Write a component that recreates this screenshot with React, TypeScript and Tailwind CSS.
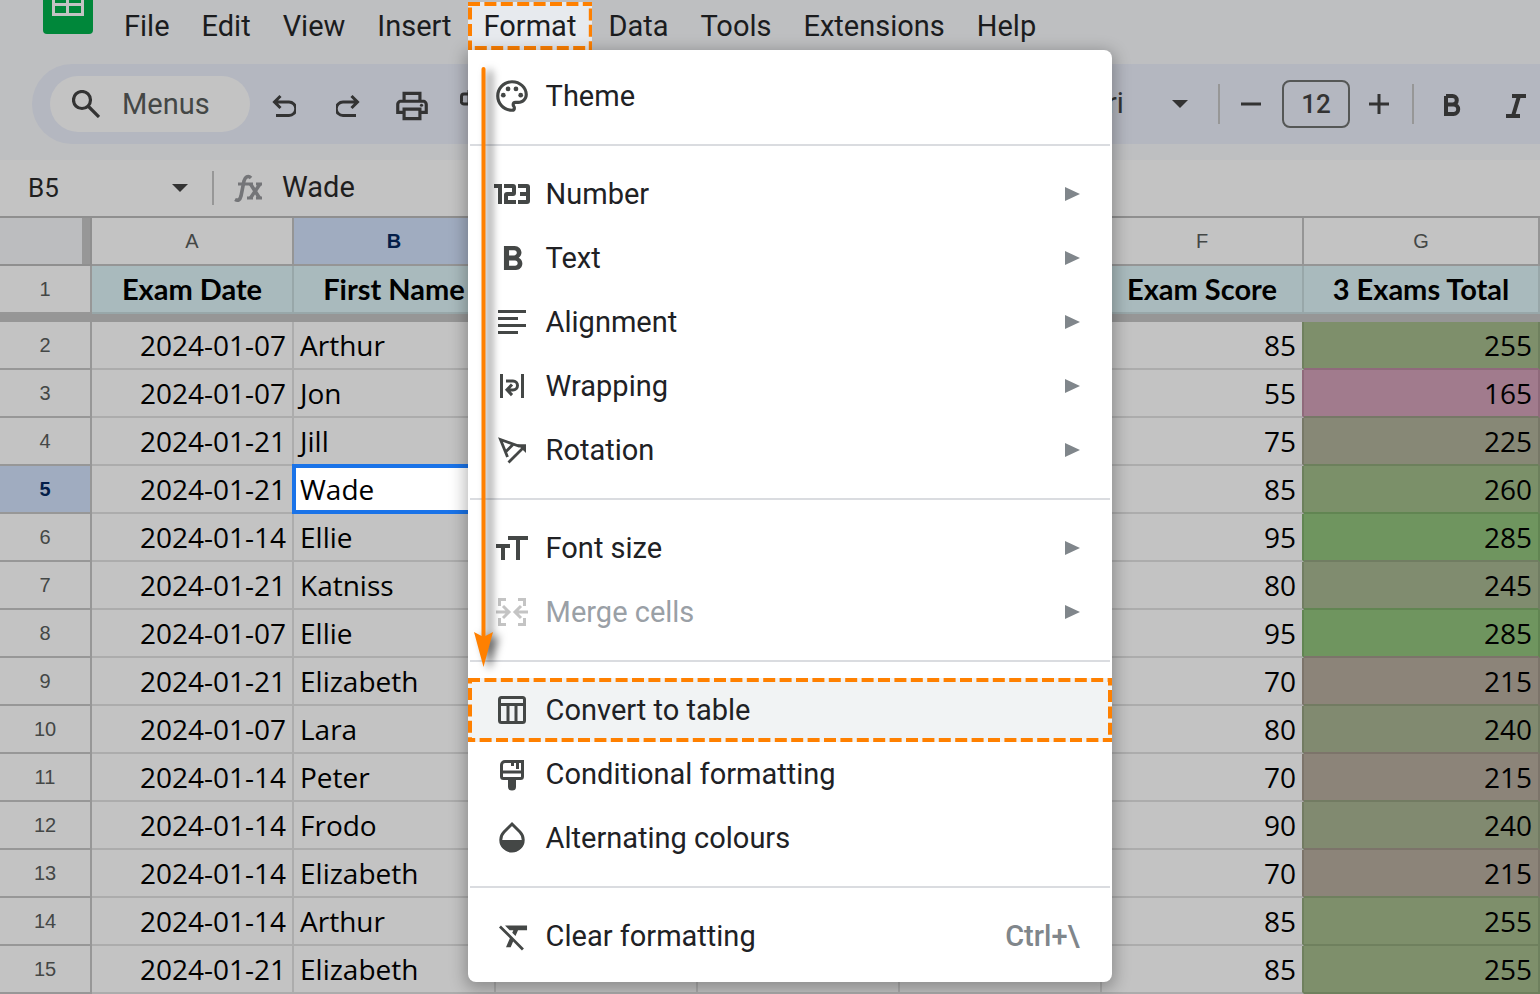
import type { ReactNode } from "react";
import { MdOutlinePalette, MdOutlinePrint } from "react-icons/md";

type Item = { label: string; icon: ReactNode; submenu?: boolean; disabled?: boolean; active?: boolean; shortcut?: string };

function Icon({ children, box = "0 0 36 36" }: { children: ReactNode; box?: string }) {
  return (
    <svg viewBox={box} className="size-9 shrink-0" fill="none" stroke="currentColor" strokeWidth="3" aria-hidden="true">
      {children}
    </svg>
  );
}

const groups: Item[][] = [
  [{ label: "Theme", icon: <MdOutlinePalette className="-mx-px size-[38px] shrink-0" aria-hidden="true" /> }],
  [
    {
      label: "Number",
      submenu: true,
      icon: (
        <Icon>
          <path strokeWidth="4" d="M0 10h6v18M10 10h9a1 1 0 0 1 1 1v6a1 1 0 0 1-1 1h-6a1 1 0 0 0-1 1v7h10M24 10h9a1 1 0 0 1 1 1v14a1 1 0 0 1-1 1h-9M26 18h8" />
        </Icon>
      ),
    },
    {
      label: "Text",
      submenu: true,
      icon: (
        <Icon box="1.2 0.5 21 21">
          <path
            fill="currentColor"
            stroke="none"
            d="M15.6 10.79c.97-.67 1.65-1.77 1.65-2.79 0-2.26-1.75-4-4-4H7v14h7.04c2.09 0 3.71-1.7 3.71-3.79 0-1.52-.86-2.82-2.15-3.42zM10 6.5h3c.83 0 1.5.67 1.5 1.5s-.67 1.5-1.5 1.5h-3v-3zm3.5 9H10v-3h3.5c.83 0 1.5.67 1.5 1.5s-.67 1.5-1.5 1.5z"
          />
        </Icon>
      ),
    },
    { label: "Alignment", submenu: true, icon: <Icon><path d="M4 7.5h28M4 14.5h20M4 21.5h28M4 28.5h20" /></Icon> },
    {
      label: "Wrapping",
      submenu: true,
      icon: <Icon><path d="M7.5 6v24M28.5 6v24M12 13h7a4.5 4.5 0 0 1 0 9h-5M18 16.5l-5 5.3 5 5.3" /></Icon>,
    },
    {
      label: "Rotation",
      submenu: true,
      icon: (
        <Icon>
          <path strokeWidth="2.8" d="M26 14.5L6.5 7.5l7 17.5M19.5 12l-8 8M14.5 30.5L29 16" />
          <path fill="currentColor" stroke="none" d="M23 12.3h9v8.7z" />
        </Icon>
      ),
    },
  ],
  [
    { label: "Font size", submenu: true, icon: <Icon><path strokeWidth="4" d="M14 8h20M24 8v22M2 16h14M9 16v14" /></Icon> },
    {
      label: "Merge cells",
      submenu: true,
      disabled: true,
      icon: (
        <Icon>
          <path d="M5.5 12V5.5H12M24 5.5h6.5V12M5.5 24v6.5H12M24 30.5h6.5V24M2 18h12M9 12l6 6-6 6M34 18H22M27 12l-6 6 6 6" />
        </Icon>
      ),
    },
  ],
  [
    {
      label: "Convert to table",
      active: true,
      icon: (
        <Icon>
          <rect x="5.5" y="5.5" width="25" height="25" rx="2" />
          <path d="M5 12.5h26M14 13v17M22 13v17" />
        </Icon>
      ),
    },
    {
      label: "Conditional formatting",
      icon: (
        <Icon>
          <path d="M11 5.5h17.5v15a2 2 0 0 1-2 2h-17a2 2 0 0 1-2-2V9a3.5 3.5 0 0 1 3.5-3.5zM7 16h22M18.5 5v5M23.5 5v8" />
          <path fill="currentColor" stroke="none" d="M14 23h8v8a4 3.5 0 0 1-8 0z" />
        </Icon>
      ),
    },
    {
      label: "Alternating colours",
      icon: (
        <Icon>
          <path d="M18 4l8 8a11.2 11.2 0 1 1-16 0z" />
          <path fill="currentColor" stroke="none" d="M6 20h24a12 12 0 0 1-24 0z" />
        </Icon>
      ),
    },
  ],
  [
    {
      label: "Clear formatting",
      shortcut: "Ctrl+\\",
      icon: (
        <Icon box="-1.2 0.2 23.1 23.1">
          <path
            fill="currentColor"
            stroke="none"
            d="M3.27 5L2 6.27l6.97 6.97L6.5 19h3l1.57-3.66L16.73 21 18 19.73 3.55 5.27 3.27 5zM6 5v.18L8.82 8h2.4l-.72 1.68 2.1 2.1L14.21 8H20V5H6z"
          />
        </Icon>
      ),
    },
  ],
];

function DashedFrame() {
  return (
    <svg className="absolute inset-0 size-full overflow-hidden" fill="none" stroke="#ff8000" aria-hidden="true">
      <rect width="100%" height="100%" strokeWidth="8" strokeDasharray="12 4.4" />
    </svg>
  );
}

function MenuRow({ item }: { item: Item }) {
  return (
    <button
      type="button"
      role="menuitem"
      disabled={item.disabled}
      className={`relative flex h-16 w-full items-center gap-4 pr-8 pl-[26px] text-left text-[29px] ${item.active ? "bg-[#f1f3f4]" : ""} ${item.disabled ? "text-[#9aa0a6]" : "text-[#202124]"}`}
    >
      <span className={item.disabled ? "text-[#c4c4c4]" : "text-[#444746]"}>{item.icon}</span>
      <span className="flex-1 pt-0.5">{item.label}</span>
      {item.submenu && (
        <svg viewBox="0 0 15 14" className="h-3.5 w-[15px]" fill="#80868b" aria-hidden="true">
          <path d="M0 0l15 7-15 7z" />
        </svg>
      )}
      {item.shortcut && <span className="pt-0.5 font-medium text-[#80868b]">{item.shortcut}</span>}
      {item.active && <DashedFrame />}
    </button>
  );
}

function FormatMenu() {
  return (
    <div
      role="menu"
      aria-label="Format"
      className="absolute top-full left-0 z-10 w-[644px] rounded-b-lg rounded-tr-lg bg-white py-3.5 shadow-[0_4px_16px_3px_rgba(0,0,0,0.28)]"
    >
      {groups.map((group, i) => (
        <div key={i}>
          {i > 0 && <hr className="mx-0.5 my-4 border-t-2 border-[#dadce0]" />}
          {group.map((item) => (
            <MenuRow key={item.label} item={item} />
          ))}
        </div>
      ))}
      <svg viewBox="0 0 40 620" className="pointer-events-none absolute top-2 left-0 h-[620px] w-10 overflow-visible" aria-hidden="true">
        <g fill="#ff8000" className="drop-shadow-[6px_3px_4px_rgba(0,0,0,0.6)]">
          <rect x="13.5" y="9" width="4" height="580" rx="2" />
          <path d="M15.5 609L6 574l9.5 5 9.5-5z" />
        </g>
      </svg>
    </div>
  );
}

function MenuBar() {
  const before = ["File", "Edit", "View", "Insert"];
  const after = ["Data", "Tools", "Extensions", "Help"];
  return (
    <header className="flex h-16 items-start pl-[43px]">
      <svg viewBox="0 0 50 34" className="mr-[15px] h-[34px] w-[50px] shrink-0" role="img" aria-label="Sheets">
        <path fill="#00873a" d="M0 0h50v30a4 4 0 0 1-4 4H4a4 4 0 0 1-4-4z" />
        <path fill="#c3c3c3" d="M9 0h32v16H9z" />
        <path fill="#00873a" d="M12 0h11v3H12zM26 0h12v3H26zM12 6h11v7H12zM26 6h12v7H26z" />
      </svg>
      <nav className="flex pt-0.5 text-[29px] text-[#1b1c1e]" aria-label="Menu bar">
        {before.map((name) => (
          <button key={name} type="button" className="h-12 px-4 pt-0.5">
            {name}
          </button>
        ))}
        <div className="relative">
          <button type="button" aria-haspopup="menu" aria-expanded="true" className="relative h-12 bg-[#e7eaee] px-4 pt-0.5">
            Format
            <DashedFrame />
          </button>
          <FormatMenu />
        </div>
        {after.map((name) => (
          <button key={name} type="button" className="h-12 px-4 pt-0.5">
            {name}
          </button>
        ))}
      </nav>
    </header>
  );
}

function Caret() {
  return (
    <svg viewBox="0 0 16 8" className="h-2 w-4 shrink-0" fill="#333" aria-hidden="true">
      <path d="M0 0h16L8 8z" />
    </svg>
  );
}

function Toolbar() {
  return (
    <div className="mb-4 ml-8 flex h-20 items-center overflow-hidden rounded-l-full bg-[#b4b7c0] pl-[18px] text-[#333]">
      <label className="flex h-14 w-[200px] shrink-0 items-center gap-[22px] rounded-full bg-[#c3c3c3] pl-[22px]">
        <svg viewBox="0 0 28 28" className="size-7 shrink-0" fill="none" stroke="currentColor" strokeWidth="3.2" aria-hidden="true">
          <circle cx="10" cy="10" r="8.5" />
          <path d="M16 16l11 11" />
        </svg>
        <input
          aria-label="Search the menus"
          placeholder="Menus"
          className="w-28 pt-0.5 text-[29px] text-[#444746] outline-none placeholder:text-[#444746]"
        />
      </label>
      <button type="button" aria-label="Undo" className="ml-[22px] shrink-0 pt-1">
        <svg viewBox="0 0 24 24" className="size-6" fill="none" stroke="currentColor" strokeWidth="3" aria-hidden="true">
          <path d="M8.5 2L2.5 8l6 6M3 8h14a6.2 6.2 0 0 1 0 13.5H4" />
        </svg>
      </button>
      <button type="button" aria-label="Redo" className="ml-10 shrink-0 pt-1">
        <svg viewBox="0 0 24 24" className="size-6" fill="none" stroke="currentColor" strokeWidth="3" aria-hidden="true">
          <path d="M15.5 2l6 6-6 6M21 8H7a6.2 6.2 0 0 0 0 13.5h13" />
        </svg>
      </button>
      <button type="button" aria-label="Print" className="ml-[33px] shrink-0 pt-1">
        <MdOutlinePrint className="size-[38px]" aria-hidden="true" />
      </button>
      <button type="button" aria-label="Paint format" className="ml-[29px] shrink-0">
        <svg viewBox="0 0 32 32" className="size-8" fill="none" stroke="currentColor" strokeWidth="3" aria-hidden="true">
          <path d="M9 3.5h18v10H9zM9 6H4a2.5 2.5 0 0 0-2.500 2.500v4A2.500 2.500 0 0 0 4 16h13v11" />
        </svg>
      </button>
      <button type="button" aria-label="Font" className="ml-[550px] flex w-[146px] shrink-0 items-center justify-between text-[29px]">
        Calibri
        <Caret />
      </button>
      <span className="ml-[30px] h-10 w-0.5 shrink-0 bg-[#979797]" />
      <button type="button" aria-label="Decrease font size" className="ml-[21px] shrink-0">
        <svg viewBox="0 0 20 20" className="size-5" stroke="currentColor" strokeWidth="3" aria-hidden="true">
          <path d="M0 10h20" />
        </svg>
      </button>
      <input
        aria-label="Font size"
        defaultValue="12"
        className="ml-[21px] h-12 w-[68px] shrink-0 rounded-lg border-2 border-[#555756] text-center text-[26px] font-medium"
      />
      <button type="button" aria-label="Increase font size" className="ml-[19px] shrink-0">
        <svg viewBox="0 0 20 20" className="size-5" stroke="currentColor" strokeWidth="3" aria-hidden="true">
          <path d="M0 10h20M10 0v20" />
        </svg>
      </button>
      <span className="ml-[23px] h-10 w-0.5 shrink-0 bg-[#979797]" />
      <button type="button" aria-label="Bold" className="ml-[29px] shrink-0 pt-0.5">
        <svg viewBox="0 0 18 22" className="h-[22px] w-[18px]" fill="none" stroke="currentColor" strokeWidth="4" aria-hidden="true">
          <path d="M3 2h6.5a4.3 4.3 0 0 1 0 8.6H3M3 10.6h7.5a4.7 4.7 0 0 1 0 9.4H3V2" />
        </svg>
      </button>
      <button type="button" aria-label="Italic" className="ml-[45px] shrink-0 pt-1">
        <svg viewBox="0 0 20 24" className="h-6 w-5" fill="none" stroke="currentColor" strokeWidth="4" aria-hidden="true">
          <path d="M6 2h14M0 22h14M13 2L7 22" />
        </svg>
      </button>
    </div>
  );
}

function FormulaBar() {
  return (
    <div className="flex h-14 items-center bg-[#c3c3c3] pl-7 text-[#1f1f1f]">
      <button type="button" aria-label="Name box" className="flex w-40 items-center justify-between text-[26px]">
        B5
        <Caret />
      </button>
      <span className="ml-6 h-[34px] w-0.5 bg-[#979797]" />
      <svg viewBox="0 0 30 30" className="ml-5 size-[30px] shrink-0" fill="none" stroke="#747578" strokeWidth="3.6" aria-hidden="true">
        <path d="M17 5c-3-3-6-1-7 3L7 23c-1 4-3 5-6 3.5" />
        <path strokeWidth="3" d="M4 11h15M22 11h6M13 25h6M22 25h6" />
        <path strokeWidth="3.6" d="M16.5 11l9 14M26 11l-9.5 14" />
      </svg>
      <input aria-label="Formula" defaultValue="Wade" className="ml-[18px] min-w-0 flex-1 text-[29px] outline-none" />
    </div>
  );
}

const rows: [string, string, number, number][] = [
  ["2024-01-07", "Arthur", 85, 255],
  ["2024-01-07", "Jon", 55, 165],
  ["2024-01-21", "Jill", 75, 225],
  ["2024-01-21", "Wade", 85, 260],
  ["2024-01-14", "Ellie", 95, 285],
  ["2024-01-21", "Katniss", 80, 245],
  ["2024-01-07", "Ellie", 95, 285],
  ["2024-01-21", "Elizabeth", 70, 215],
  ["2024-01-07", "Lara", 80, 240],
  ["2024-01-14", "Peter", 70, 215],
  ["2024-01-14", "Frodo", 90, 240],
  ["2024-01-14", "Elizabeth", 70, 215],
  ["2024-01-14", "Arthur", 85, 255],
  ["2024-01-21", "Elizabeth", 85, 255],
];

const scale: Record<number, { fill: string; right: string; bottom: string }> = {
  165: { fill: "bg-[#a17b8d]", right: "border-r-[#8f6a7b]", bottom: "border-b-[#8f6a7b]" },
  215: { fill: "bg-[#8c8479]", right: "border-r-[#7c746a]", bottom: "border-b-[#7c746a]" },
  225: { fill: "bg-[#878876]", right: "border-r-[#777867]", bottom: "border-b-[#777867]" },
  240: { fill: "bg-[#818a70]", right: "border-r-[#727b62]", bottom: "border-b-[#727b62]" },
  245: { fill: "bg-[#808c6f]", right: "border-r-[#717d62]", bottom: "border-b-[#717d62]" },
  255: { fill: "bg-[#7e8f6b]", right: "border-r-[#6f805e]", bottom: "border-b-[#6f805e]" },
  260: { fill: "bg-[#7b9069]", right: "border-r-[#6c805c]", bottom: "border-b-[#6c805c]" },
  285: { fill: "bg-[#6f955f]", right: "border-r-[#618552]", bottom: "border-b-[#618552]" },
};

const cell = "border-r-2 border-b-2 border-[#acacac]";

function Grid() {
  const letters = ["A", "B", "", "", "", "F", "G"];
  const titles = ["Exam Date", "First Name", "", "", "", "Exam Score", "3 Exams Total"];
  return (
    <table className="w-full min-w-[1540px] table-fixed border-separate border-spacing-0 border-t-2 border-[#8f8f8f] bg-[#c3c3c3] font-['Open_Sans',sans-serif] text-[28px] text-black">
      <colgroup>
        <col className="w-[92px]" />
        <col className="w-[202px]" />
        <col className="w-[202px]" />
        <col className="w-[202px]" />
        <col className="w-[202px]" />
        <col className="w-[202px]" />
        <col className="w-[202px]" />
        <col />
      </colgroup>
      <thead>
        <tr className="h-12 font-['Liberation_Sans'] text-[20px] text-[#444746]">
          <td className="border-r-2 border-b-2 border-[#8f8f8f] p-0">
            <div className="h-[46px] border-r-8 border-[#979797] bg-[#bcbdbf]" />
          </td>
          {letters.map((letter, i) => (
            <th
              key={i}
              scope="col"
              className={`border-r-2 border-b-2 border-[#959595] p-0 ${letter === "B" ? "bg-[#a0acc0] font-bold text-[#041e49]" : "font-normal"}`}
            >
              {letter}
            </th>
          ))}
        </tr>
        <tr className="h-12">
          <th scope="row" className="border-r-2 border-b-2 border-[#979797] p-0 font-['Liberation_Sans'] text-[20px] font-normal text-[#444746]">
            1
          </th>
          {titles.map((title, i) => (
            <th key={i} scope="col" className="border-r-2 border-b-2 border-[#98a7a9] bg-[#a9babd] p-0 font-['Lato',sans-serif] text-[29px] font-bold">
              {title}
            </th>
          ))}
        </tr>
        <tr className="h-2">
          <td colSpan={8} className="bg-[#969696] p-0" />
        </tr>
      </thead>
      <tbody className="leading-10">
        {rows.map(([date, name, score, total], i) => {
          const own = scale[total];
          const below = scale[(rows[i + 1] ?? rows[i])[3]];
          const selected = i === 3;
          return (
            <tr key={i} className="h-12">
              <th
                scope="row"
                className={`border-r-2 border-b-2 border-[#979797] p-0 font-['Liberation_Sans'] text-[20px] ${selected ? "bg-[#a0acc0] font-bold text-[#041e49]" : "font-normal text-[#444746]"}`}
              >
                {i + 2}
              </th>
              <td className={`${cell} p-0 pr-1.5 text-right`}>{date}</td>
              <td className={`${cell} relative p-0 pl-1.5 ${selected ? "bg-white" : ""}`}>
                {name}
                {selected && <span className="absolute -inset-0.5 border-4 border-[#1a73e8]" />}
              </td>
              <td className={cell} />
              <td className={cell} />
              <td className={cell} />
              <td className={`border-r-2 border-b-2 border-b-[#acacac] p-0 pr-1.5 text-right ${own.right}`}>{score}</td>
              <td className={`border-r-2 border-b-2 p-0 pr-1.5 text-right ${own.fill} ${own.right} ${below.bottom}`}>{total}</td>
            </tr>
          );
        })}
      </tbody>
    </table>
  );
}

export default function App() {
  return (
    <div className="relative min-h-screen overflow-hidden bg-[#bebfc1] font-['Roboto',sans-serif]">
      <MenuBar />
      <Toolbar />
      <FormulaBar />
      <Grid />
    </div>
  );
}
